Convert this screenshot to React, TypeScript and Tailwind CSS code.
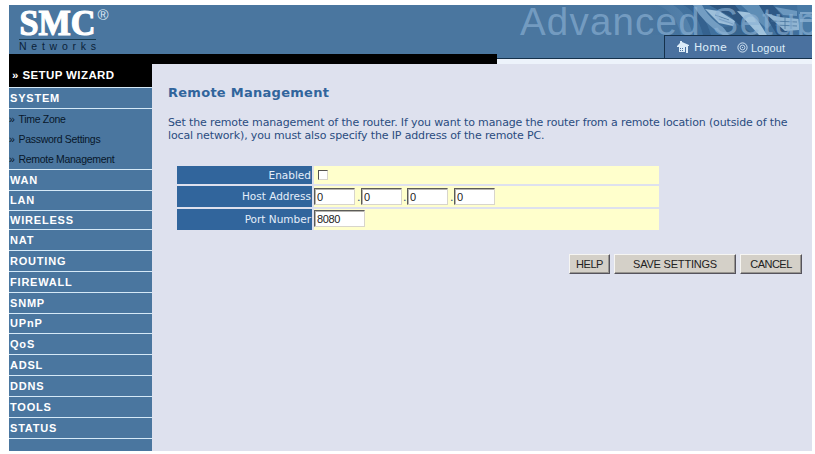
type MenuItem = {
  label: string
  height: string
}

const menu: MenuItem[] = [
  { label: 'WAN', height: 'h-[21px]' },
  { label: 'LAN', height: 'h-[20px]' },
  { label: 'WIRELESS', height: 'h-[19px]' },
  { label: 'NAT', height: 'h-[21px]' },
  { label: 'ROUTING', height: 'h-[21px]' },
  { label: 'FIREWALL', height: 'h-[21px]' },
  { label: 'SNMP', height: 'h-[21px]' },
  { label: 'UPnP', height: 'h-[20px]' },
  { label: 'QoS', height: 'h-[21px]' },
  { label: 'ADSL', height: 'h-[21px]' },
  { label: 'DDNS', height: 'h-[21px]' },
  { label: 'TOOLS', height: 'h-[21px]' },
  { label: 'STATUS', height: 'h-[21px]' },
]

const systemLinks = ['Time Zone', 'Password Settings', 'Remote Management']

function Logo() {
  return (
    <svg width="110" height="49" viewBox="0 0 110 49" className="shrink-0">
      <text
        x="10.5"
        y="29.5"
        textLength="76"
        lengthAdjust="spacingAndGlyphs"
        fontFamily="Liberation Serif, serif"
        fontWeight="bold"
        fontSize="35"
        fill="#fff"
        stroke="#fff"
        strokeWidth="1.2"
      >
        SMC
      </text>
      <text
        x="88.5"
        y="14.5"
        fontFamily="Liberation Sans, sans-serif"
        fontSize="15"
        fill="#dbe9f5"
      >
        ®
      </text>
      <rect x="10" y="34" width="77" height="1" fill="#173a50" />
      <text
        x="10"
        y="45"
        textLength="77"
        fontFamily="Liberation Sans, sans-serif"
        fontSize="10.5"
        fill="#0b2238"
      >
        Networks
      </text>
    </svg>
  )
}

function Banner() {
  return (
    <svg
      width="315"
      height="44"
      viewBox="0 0 315 44"
      className="absolute top-0 right-0"
    >
      <defs>
        <linearGradient id="fade" x1="0" x2="1">
          <stop offset="0" stopColor="#4a769f" />
          <stop offset="0.3" stopColor="#4a769f" stopOpacity="0" />
        </linearGradient>
        <filter id="soft">
          <feGaussianBlur stdDeviation="0.7" />
        </filter>
        <clipPath id="strip">
          <rect x="150" y="0" width="165" height="30" />
        </clipPath>
      </defs>
      <g clipPath="url(#strip)">
        <rect x="150" y="0" width="165" height="30" fill="#40709d" />
        <g filter="url(#soft)">
          <path d="M160 0Q178 6 184 30H196Q190 8 176 0Z" fill="#5583ad" />
          <path d="M186 0Q200 6 206 30H214Q208 10 196 0Z" fill="#34628f" />
          <path d="M196 0Q206 18 226 30H240Q214 18 205 0Z" fill="#739dc2" />
          <path d="M208 4L222 6L238 16L236 21L222 18Z" fill="#9dbfda" />
          <path d="M212 0H238L248 12L244 22L234 12Z" fill="#2d5680" />
          <path d="M240 6L256 8L270 30H262Z" fill="#a0c2dc" />
          <path d="M226 22L244 20L258 30H232Z" fill="#37658f" />
          <path d="M244 0H262L276 18L270 24Z" fill="#5f8eb6" />
          <path d="M262 0H276L296 24L288 30H280Z" fill="#2e5985" />
          <path d="M268 8L282 12L302 14V25L288 26Z" fill="#91b5d2" />
          <path d="M278 2L300 6V11L286 10Z" fill="#6c98bf" />
          <path d="M300 0H315V30H303Z" fill="#4a7aa6" />
          <path d="M303 7H315V9H303ZM303 14H315V17H303Z" fill="#7ea5c8" />
        </g>
        <path
          d="M218 10L232 15M222 14L236 19M274 16L300 17M278 20L300 21M288 12V24M294 12V24"
          stroke="#47749d"
          strokeWidth="0.8"
        />
        <rect x="150" y="0" width="165" height="30" fill="url(#fade)" />
      </g>
      <text
        x="23"
        y="30"
        textLength="298"
        fontFamily="Liberation Sans, sans-serif"
        fontSize="38.5"
        fill="#8cb2d5"
        fillOpacity="0.65"
      >
        Advanced Setup
      </text>
    </svg>
  )
}

function Header() {
  return (
    <header className="relative flex h-[49px] w-[803px] bg-[#4a769f]">
      <Logo />
      <div className="absolute top-[49px] right-0 h-[5px] w-[315px] border-b border-[#15314b] bg-[#4a769f]" />
      <div className="absolute top-[54px] right-0 h-[5px] w-[315px] bg-[#edf3fb]" />
      <Banner />
      <nav className="absolute top-[30px] right-0 flex h-[23px] w-[148px] border-t border-l border-[#15314b] bg-[#4a719f] font-['Liberation_Sans',Arial,sans-serif] text-[11px] text-[#dcecf8]">
        <a className="ml-3 flex items-center gap-1">
          <svg width="13" height="12" viewBox="0 0 13 12">
            <path
              d="M0 5L3 2V0H5V1L12 4V5H11V12H9V6H8V11H2V6H0Z"
              fill="#dcecf8"
            />
            <path
              d="M3 7H4V8H3ZM5 7H6V8H5ZM3 9H4V10H3ZM5 9H6V10H5Z"
              fill="#4a719f"
            />
          </svg>
          <span className="pt-[3px] font-['DejaVu_Sans',Verdana,sans-serif] tracking-[0.1px]">
            Home
          </span>
        </a>
        <a className="ml-[10px] flex items-center gap-[3px]">
          <svg
            width="11"
            height="11"
            viewBox="0 0 11 11"
            fill="none"
            stroke="#dcecf8"
            className="mt-px"
          >
            <circle cx="5.5" cy="5.5" r="4.6" strokeWidth="0.9" />
            <circle cx="5.5" cy="5.5" r="2.4" strokeWidth="0.8" />
            <circle cx="5.5" cy="5.5" r="0.6" fill="#dcecf8" stroke="none" />
          </svg>
          <span className="pt-[2px] tracking-[0.1px]">Logout</span>
        </a>
      </nav>
    </header>
  )
}

function Sidebar() {
  return (
    <aside className="flex w-[143px] shrink-0 flex-col overflow-hidden bg-[#4a769f] font-['Liberation_Sans',Arial,sans-serif] text-[11px] font-bold tracking-[0.8px] text-white">
      <div className="flex h-[34px] shrink-0 items-center border-b border-[#d5e9f7] bg-black pt-[11px] pl-[3px] text-[11.5px] tracking-[0.4px]">
        » SETUP WIZARD
      </div>
      <div className="flex h-[21px] shrink-0 items-center border-b border-[#d5e9f7] pl-px">
        SYSTEM
      </div>
      <ul className="h-[61px] shrink-0 border-b border-[#d5e9f7] text-[10.5px] font-normal tracking-[-0.3px] text-[#08162a]">
        {systemLinks.map((link) => (
          <li key={link} className="flex h-5 items-center pt-[2px]">
            <span className="w-[9.5px]">»</span>
            <span>{link}</span>
          </li>
        ))}
      </ul>
      {menu.map((item) => (
        <div
          key={item.label}
          className={`flex shrink-0 items-center border-b border-[#d5e9f7] pl-px ${item.height}`}
        >
          {item.label}
        </div>
      ))}
    </aside>
  )
}

function Field({ value, width }: { value: string; width: string }) {
  return (
    <input
      defaultValue={value}
      className={`h-[17px] border border-t-[#5c5c58] border-r-[#d8d5cc] border-b-[#d8d5cc] border-l-[#5c5c58] bg-white pl-[2px] font-['Liberation_Sans',Arial,sans-serif] text-[11px] tracking-[-0.4px] text-[#222] shadow-[inset_1px_1px_0_#b5b3ae] outline-none ${width}`}
    />
  )
}

function Label({ children }: { children: string }) {
  return (
    <div className="flex w-[135px] items-center justify-end bg-[#31659c] pt-px pr-px text-[10.5px] tracking-normal text-[#e4eefa]">
      {children}
    </div>
  )
}

function SettingsForm() {
  return (
    <div className="mt-[24px] ml-[9px] flex w-[482px] flex-col gap-[2px]">
      <div className="flex h-[18px] gap-[2px]">
        <Label>Enabled</Label>
        <div className="flex flex-1 items-center bg-[#ffffcc] pl-[4px]">
          <input
            type="checkbox"
            className="size-[10px] appearance-none border border-t-[#55534f] border-r-[#d8d5cc] border-b-[#d8d5cc] border-l-[#55534f] bg-white"
          />
        </div>
      </div>
      <div className="flex h-[21px] gap-[2px]">
        <Label>Host Address</Label>
        <div className="flex flex-1 items-center bg-[#ffffcc]">
          <Field value="0" width="w-[41px]" />
          <span className="w-[6px] pt-1 pl-[2px]">.</span>
          <Field value="0" width="w-[41px]" />
          <span className="w-[5px] pt-1 pl-px">.</span>
          <Field value="0" width="w-[41px]" />
          <span className="w-[6px] pt-1 pl-[2px]">.</span>
          <Field value="0" width="w-[41px]" />
        </div>
      </div>
      <div className="flex h-[21px] gap-[2px]">
        <Label>Port Number</Label>
        <div className="flex flex-1 items-start bg-[#ffffcc] pt-px">
          <Field value="8080" width="w-[51px]" />
        </div>
      </div>
    </div>
  )
}

function Button({ label, className }: { label: string; className: string }) {
  return (
    <button
      className={`h-[20px] border border-t-[#f6f5f2] border-r-[#55535c] border-b-[#55535c] border-l-[#f6f5f2] bg-[#d4d0c8] font-['Liberation_Sans',Arial,sans-serif] text-[11px] whitespace-nowrap text-[#222] shadow-[inset_-1px_-1px_0_#98958f] ${className}`}
    >
      {label}
    </button>
  )
}

export default function App() {
  return (
    <div className="h-[454px] w-[815px] overflow-hidden bg-white pt-[5px] pl-[9px]">
      <Header />
      <div className="flex h-[397px] w-[803px] bg-[#dee1ee]">
        <Sidebar />
        <div className="flex flex-1 flex-col">
          <div className="h-[10px] w-[345px] bg-black" />
          <main className="pl-4 font-['DejaVu_Sans',Verdana,sans-serif] text-[11px] tracking-[-0.14px] text-[#2a4c80]">
            <h1 className="mt-[20px] text-[13px] leading-[18px] font-bold tracking-[0.27px] text-[#31659c]">
              Remote Management
            </h1>
            <p className="mt-[14px] leading-[13px] whitespace-nowrap">
              Set the remote management of the router. If you want to manage the
              router from a remote location (outside of the
              <br />
              local network), you must also specify the IP address of the remote
              PC.
            </p>
            <SettingsForm />
            <div className="mt-[24px] ml-[401px] flex gap-[4px]">
              <Button label="HELP" className="w-[41px] tracking-[-0.4px]" />
              <Button
                label="SAVE SETTINGS"
                className="w-[122px] tracking-[-0.2px]"
              />
              <Button label="CANCEL" className="w-[62px] tracking-[-0.5px]" />
            </div>
          </main>
        </div>
      </div>
    </div>
  )
}
